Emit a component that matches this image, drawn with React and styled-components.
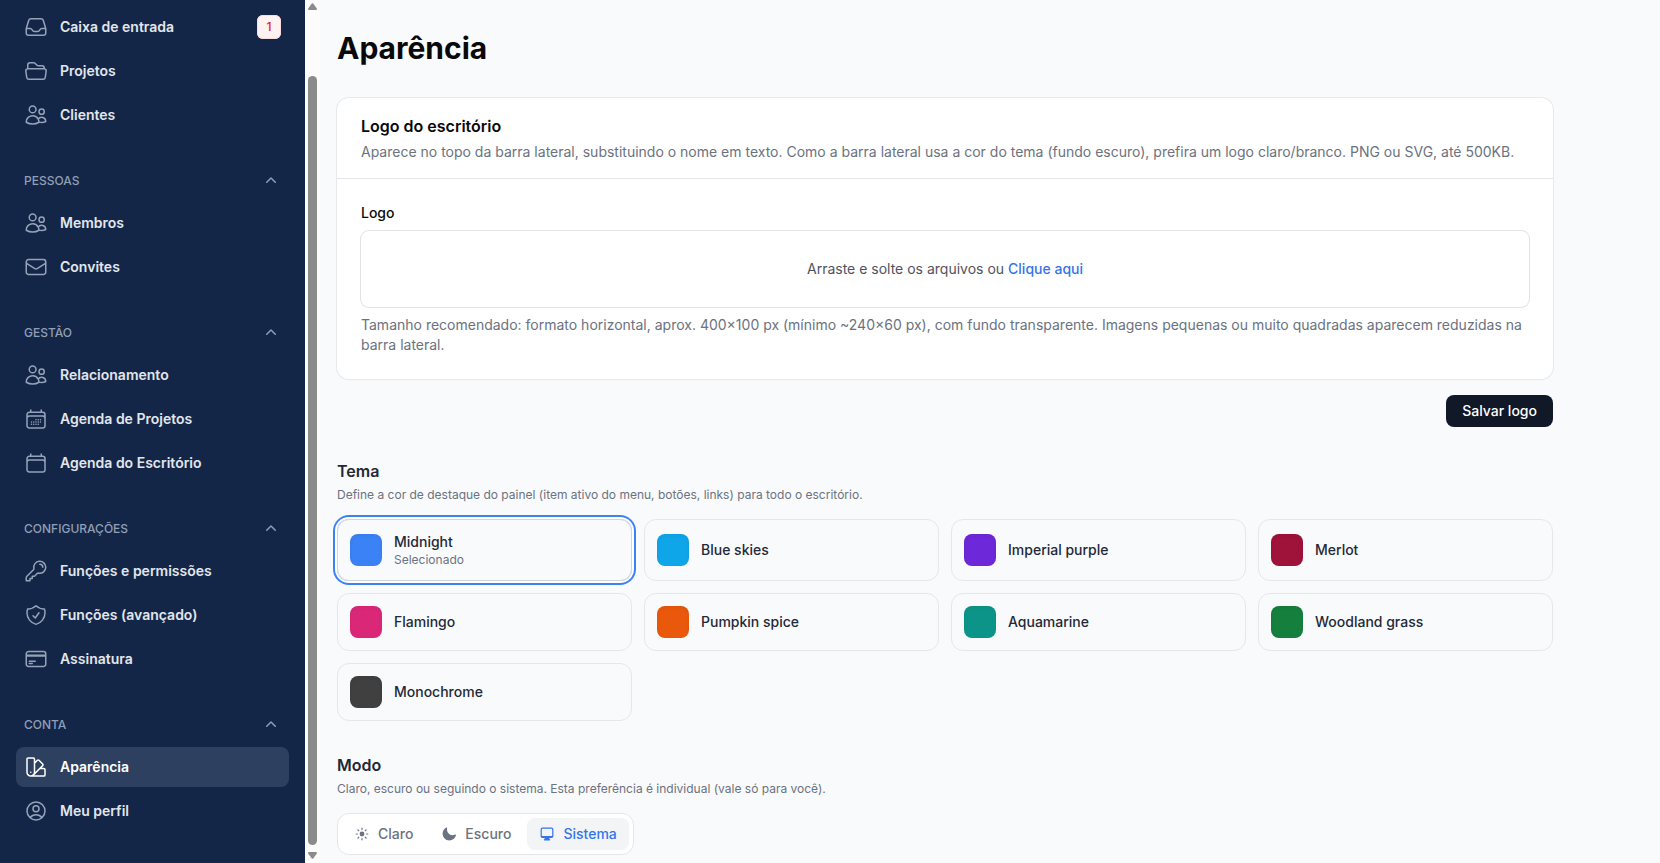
import { useState } from "react";
import styled, { createGlobalStyle } from "styled-components";
import {
  HiOutlineInbox,
  HiOutlineFolderOpen,
  HiOutlineUsers,
  HiOutlineEnvelope,
  HiOutlineCalendarDays,
  HiOutlineCalendar,
  HiOutlineKey,
  HiOutlineShieldCheck,
  HiOutlineCreditCard,
  HiOutlineSwatch,
  HiOutlineUserCircle,
  HiMiniChevronUp,
  HiMiniSun,
  HiMiniMoon,
  HiMiniComputerDesktop,
} from "react-icons/hi2";

const GlobalStyle = createGlobalStyle`
  *, *::before, *::after {
    box-sizing: border-box;
  }
  body {
    margin: 0;
    background-color: #f9fafc;
    font-family: Inter, "Liberation Sans", sans-serif;
    font-size: 14px;
    line-height: 20px;
  }
  h1, h2, p, ul {
    margin: 0;
    padding: 0;
  }
  ul {
    list-style: none;
  }
  button {
    font: inherit;
    cursor: pointer;
  }
`;

const Layout = styled.div`
  display: flex;
  min-height: 100vh;
`;

const Sidebar = styled.aside`
  display: flex;
  flex: none;
  width: 320px;
  background-color: #fcfcfc;
`;

const Nav = styled.nav`
  flex: 1;
  display: flex;
  flex-direction: column;
  gap: 28px;
  padding: 7px 16px 32px;
  background-color: #142648;
`;

const NavGroup = styled.section`
  display: flex;
  flex-direction: column;
  gap: 4px;
`;

const GroupButton = styled.button`
  display: flex;
  align-items: center;
  justify-content: space-between;
  height: 36px;
  padding: 0 8px;
  border: 0;
  background: none;
  color: #8f9fb5;
  font-size: 12px;
  font-weight: 500;
  text-transform: uppercase;
`;

const NavList = styled.ul`
  display: flex;
  flex-direction: column;
  gap: 4px;
`;

const NavLink = styled.a`
  display: flex;
  align-items: center;
  gap: 12px;
  height: 40px;
  padding: 0 8px;
  border-radius: 8px;
  background-color: ${(props) => (props.$active ? "#2e4060" : "transparent")};
  color: ${(props) => (props.$active ? "#ffffff" : "#e2e6ec")};
  font-weight: 600;
  text-decoration: none;

  svg {
    flex: none;
    color: ${(props) => (props.$active ? "#ffffff" : "#94a3b8")};
  }
`;

const NavLabel = styled.span`
  flex: 1;
`;

const Badge = styled.span`
  min-width: 24px;
  padding: 4px 6px;
  border-radius: 6px;
  background-color: #fef2f2;
  box-shadow: inset 0 0 0 1px #fbdcdc;
  color: #dc2626;
  font-size: 12px;
  font-weight: 500;
  line-height: 16px;
  text-align: center;
`;

const Scrollbar = styled.div`
  display: flex;
  flex-direction: column;
  align-items: center;
  flex: none;
  width: 15px;
  padding: 3px 3px 4px;
  color: #8b8b8b;
`;

const Thumb = styled.div`
  flex: 1;
  width: 9px;
  margin: 66px 0 7px;
  border-radius: 5px;
  background-color: #8b8b8b;
`;

const Main = styled.main`
  flex: 1;
  min-width: 0;
  padding: 30px 32px 8px 17px;
`;

const Content = styled.div`
  display: flex;
  flex-direction: column;
  gap: 32px;
  max-width: 1216px;
`;

const PageTitle = styled.h1`
  color: #09090b;
  font-size: 30px;
  font-weight: 700;
  line-height: 36px;
`;

const LogoForm = styled.form`
  display: flex;
  flex-direction: column;
  gap: 16px;
`;

const Card = styled.section`
  border-radius: 12px;
  background-color: #ffffff;
  box-shadow: 0 0 0 1px #e8e9eb, 0 1px 2px rgba(0, 0, 0, 0.03);
`;

const CardHeader = styled.header`
  display: flex;
  flex-direction: column;
  gap: 4px;
  padding: 16px 24px;
`;

const CardTitle = styled.h2`
  color: #09090b;
  font-size: 16px;
  font-weight: 600;
  line-height: 24px;
`;

const HelpText = styled.p`
  color: #6b7280;
`;

const CardBody = styled.div`
  display: flex;
  flex-direction: column;
  gap: 8px;
  padding: 24px;
  border-top: 1px solid #e4e5e8;
`;

const FieldLabel = styled.label`
  color: #09090b;
  font-weight: 500;
`;

const DropZone = styled.label`
  display: flex;
  align-items: center;
  justify-content: center;
  gap: 4px;
  height: 76px;
  border-radius: 8px;
  box-shadow: 0 0 0 1px #e2e3e5, 0 1px 2px rgba(0, 0, 0, 0.03);
  color: #52525b;
  cursor: pointer;
`;

const Browse = styled.span`
  color: #3574ea;
  font-weight: 500;
`;

const FileInput = styled.input`
  display: none;
`;

const SaveButton = styled.button`
  align-self: flex-end;
  height: 32px;
  padding: 0 16px;
  border: 0;
  border-radius: 8px;
  background-color: #111827;
  color: #ffffff;
  font-weight: 500;
`;

const Section = styled.section`
  display: flex;
  flex-direction: column;
  align-items: flex-start;
  gap: 16px;
`;

const SectionHeader = styled.header`
  display: flex;
  flex-direction: column;
  gap: 4px;
`;

const SectionTitle = styled.h2`
  color: #1f2937;
  font-size: 16px;
  font-weight: 600;
  line-height: 24px;
`;

const SmallText = styled.span`
  color: #6b7280;
  font-size: 12px;
  line-height: 16px;
`;

const ThemeGrid = styled.div`
  display: grid;
  grid-template-columns: repeat(4, minmax(0, 1fr));
  gap: 12px;
  width: 100%;

  @media screen and (max-width: 1023px) {
    grid-template-columns: repeat(2, minmax(0, 1fr));
  }
`;

const ThemeButton = styled.button`
  display: flex;
  align-items: center;
  gap: 12px;
  padding: 12px;
  border: 1px solid ${(props) => (props.$selected ? "#d1d5db" : "#e5e7eb")};
  border-radius: 12px;
  background-color: transparent;
  box-shadow: ${(props) =>
    props.$selected ? "0 0 0 2px #ffffff, 0 0 0 4px #3b82f6" : "none"};
  text-align: left;
`;

const Swatch = styled.span`
  flex: none;
  width: 32px;
  height: 32px;
  border-radius: 8px;
  background-color: ${(props) => props.$color};
  box-shadow: inset 0 2px 4px rgba(0, 0, 0, 0.05);
`;

const ThemeText = styled.span`
  display: flex;
  flex-direction: column;
`;

const ThemeName = styled.span`
  color: #1f2937;
  font-weight: 500;
`;

const ModeGroup = styled.div`
  display: flex;
  gap: 4px;
  padding: 4px;
  border: 1px solid #e5e7eb;
  border-radius: 12px;
  background-color: #ffffff;
`;

const ModeButton = styled.button`
  display: flex;
  align-items: center;
  gap: 8px;
  height: 32px;
  padding: 0 12px;
  border: 0;
  border-radius: 8px;
  background-color: ${(props) => (props.$selected ? "#f3f4f6" : "transparent")};
  color: ${(props) => (props.$selected ? "#3574ea" : "#6b7280")};
  font-weight: 500;
`;

const navGroups = [
  {
    items: [
      { label: "Caixa de entrada", icon: HiOutlineInbox, badge: 1 },
      { label: "Projetos", icon: HiOutlineFolderOpen },
      { label: "Clientes", icon: HiOutlineUsers },
    ],
  },
  {
    title: "Pessoas",
    items: [
      { label: "Membros", icon: HiOutlineUsers },
      { label: "Convites", icon: HiOutlineEnvelope },
    ],
  },
  {
    title: "Gestão",
    items: [
      { label: "Relacionamento", icon: HiOutlineUsers },
      { label: "Agenda de Projetos", icon: HiOutlineCalendarDays },
      { label: "Agenda do Escritório", icon: HiOutlineCalendar },
    ],
  },
  {
    title: "Configurações",
    items: [
      { label: "Funções e permissões", icon: HiOutlineKey },
      { label: "Funções (avançado)", icon: HiOutlineShieldCheck },
      { label: "Assinatura", icon: HiOutlineCreditCard },
    ],
  },
  {
    title: "Conta",
    items: [
      { label: "Aparência", icon: HiOutlineSwatch, active: true },
      { label: "Meu perfil", icon: HiOutlineUserCircle },
    ],
  },
];

const themes = [
  { name: "Midnight", color: "#3b82f6" },
  { name: "Blue skies", color: "#0ea5e9" },
  { name: "Imperial purple", color: "#6d28d9" },
  { name: "Merlot", color: "#9f1239" },
  { name: "Flamingo", color: "#db2777" },
  { name: "Pumpkin spice", color: "#ea580c" },
  { name: "Aquamarine", color: "#0d9488" },
  { name: "Woodland grass", color: "#15803d" },
  { name: "Monochrome", color: "#404040" },
];

const modes = [
  { name: "Claro", icon: HiMiniSun },
  { name: "Escuro", icon: HiMiniMoon },
  { name: "Sistema", icon: HiMiniComputerDesktop },
];

function SidebarNav() {
  return (
    <Sidebar>
      <Nav>
        {navGroups.map((group, index) => (
          <NavGroup key={index}>
            {group.title && (
              <GroupButton type="button" aria-expanded="true">
                {group.title}
                <HiMiniChevronUp size={20} />
              </GroupButton>
            )}
            <NavList>
              {group.items.map((item) => (
                <li key={item.label}>
                  <NavLink href="#" $active={item.active}>
                    <item.icon size={24} />
                    <NavLabel>{item.label}</NavLabel>
                    {item.badge && <Badge>{item.badge}</Badge>}
                  </NavLink>
                </li>
              ))}
            </NavList>
          </NavGroup>
        ))}
      </Nav>
      <Scrollbar aria-hidden="true">
        <svg width="9" height="7" viewBox="0 0 9 7" fill="currentColor">
          <path d="M3.8 0.6Q4.5 -0.2 5.2 0.6L8.8 5.6Q9.2 7 8 7H1Q-0.2 7 0.2 5.6Z" />
        </svg>
        <Thumb />
        <svg width="9" height="7" viewBox="0 0 9 7" fill="currentColor">
          <path d="M3.8 6.4Q4.5 7.2 5.2 6.4L8.8 1.4Q9.2 0 8 0H1Q-0.2 0 0.2 1.4Z" />
        </svg>
      </Scrollbar>
    </Sidebar>
  );
}

function App() {
  const [theme, setTheme] = useState("Midnight");
  const [mode, setMode] = useState("Sistema");

  return (
    <Layout>
      <GlobalStyle />
      <SidebarNav />
      <Main>
        <Content>
          <PageTitle>Aparência</PageTitle>

          <LogoForm onSubmit={(e) => e.preventDefault()}>
            <Card>
              <CardHeader>
                <CardTitle>Logo do escritório</CardTitle>
                <HelpText>
                  Aparece no topo da barra lateral, substituindo o nome em
                  texto. Como a barra lateral usa a cor do tema (fundo escuro),
                  prefira um logo claro/branco. PNG ou SVG, até 500KB.
                </HelpText>
              </CardHeader>
              <CardBody>
                <FieldLabel htmlFor="logo">Logo</FieldLabel>
                <DropZone htmlFor="logo">
                  Arraste e solte os arquivos ou <Browse>Clique aqui</Browse>
                </DropZone>
                <FileInput id="logo" type="file" accept=".png,.svg" />
                <HelpText>
                  Tamanho recomendado: formato horizontal, aprox. 400×100 px
                  (mínimo ~240×60 px), com fundo transparente. Imagens pequenas
                  ou muito quadradas aparecem reduzidas na barra lateral.
                </HelpText>
              </CardBody>
            </Card>
            <SaveButton type="submit">Salvar logo</SaveButton>
          </LogoForm>

          <Section>
            <SectionHeader>
              <SectionTitle>Tema</SectionTitle>
              <SmallText as="p">
                Define a cor de destaque do painel (item ativo do menu, botões,
                links) para todo o escritório.
              </SmallText>
            </SectionHeader>
            <ThemeGrid>
              {themes.map(({ name, color }) => (
                <ThemeButton
                  key={name}
                  type="button"
                  aria-pressed={theme === name}
                  $selected={theme === name}
                  onClick={() => setTheme(name)}
                >
                  <Swatch $color={color} />
                  <ThemeText>
                    <ThemeName>{name}</ThemeName>
                    {theme === name && <SmallText>Selecionado</SmallText>}
                  </ThemeText>
                </ThemeButton>
              ))}
            </ThemeGrid>
          </Section>

          <Section>
            <SectionHeader>
              <SectionTitle>Modo</SectionTitle>
              <SmallText as="p">
                Claro, escuro ou seguindo o sistema. Esta preferência é
                individual (vale só para você).
              </SmallText>
            </SectionHeader>
            <ModeGroup>
              {modes.map(({ name, icon: Icon }) => (
                <ModeButton
                  key={name}
                  type="button"
                  aria-pressed={mode === name}
                  $selected={mode === name}
                  onClick={() => setMode(name)}
                >
                  <Icon size={16} />
                  {name}
                </ModeButton>
              ))}
            </ModeGroup>
          </Section>
        </Content>
      </Main>
    </Layout>
  );
}

export default App;
